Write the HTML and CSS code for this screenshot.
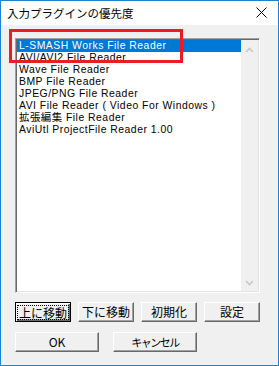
FILE: index.html
```html
<!DOCTYPE html>
<html lang="ja">
<head>
    <meta charset="UTF-8">
    <title>入力プラグインの優先度</title>
    <link rel="stylesheet" href="styles.css">
</head>
<body>
    <div class="window">
        <div class="titlebar">
            <span class="title">入力プラグインの優先度</span>
            <svg class="close" width="11" height="11" viewBox="0 0 11 11">
                <path d="M0.5 0.5 L10.5 10.5 M10.5 0.5 L0.5 10.5" stroke="#000" stroke-width="1" fill="none"/>
            </svg>
        </div>

        <div class="content">
            <div class="listbox">
                <ul class="items">
                    <li class="selected">L-SMASH Works File Reader</li>
                    <li>AVI/AVI2 File Reader</li>
                    <li>Wave File Reader</li>
                    <li>BMP File Reader</li>
                    <li>JPEG/PNG File Reader</li>
                    <li>AVI File Reader ( Video For Windows )</li>
                    <li>拡張編集 File Reader</li>
                    <li>AviUtl ProjectFile Reader 1.00</li>
                </ul>
                <div class="scrollbar">
                    <svg width="9" height="6" viewBox="0 0 9 6">
                        <path d="M1 5 L4.5 1.5 L8 5" stroke="#c8c8c8" stroke-width="1.6" fill="none"/>
                    </svg>
                    <svg width="9" height="6" viewBox="0 0 9 6">
                        <path d="M1 1 L4.5 4.5 L8 1" stroke="#c8c8c8" stroke-width="1.6" fill="none"/>
                    </svg>
                </div>
            </div>

            <div class="buttons">
                <button class="btn default"><span class="focus">上に移動</span></button>
                <button class="btn">下に移動</button>
                <button class="btn">初期化</button>
                <button class="btn">設定</button>
            </div>
            <div class="buttons wide">
                <button class="btn">OK</button>
                <button class="btn narrow-text">キャンセル</button>
            </div>
        </div>

        <div class="highlight-box"></div>
    </div>
</body>
</html>
```

FILE: styles.css
```css
body {
    margin: 0;
    background: #f0f0f0;
}

.window {
    position: relative;
    width: 279px;
    height: 366px;
    box-sizing: border-box;
    border: 1px solid #1883d7;
    background: #f0f0f0;
    font-family: "Liberation Sans", "Noto Sans CJK JP", sans-serif;
    color: #000;
}

.titlebar {
    height: 24px;
    background: #fff;
    display: flex;
    align-items: center;
    justify-content: space-between;
    padding: 0 11px 0 6px;
}

.title {
    font-family: "Noto Sans CJK JP", sans-serif;
    font-size: 11.5px;
    line-height: 14px;
    margin-top: -1px;
}

.close {
    display: block;
    margin-top: -2px;
}

.content {
    padding: 13px 0 0 14px;
}

.listbox {
    width: 245px;
    height: 255px;
    box-sizing: border-box;
    display: flex;
    background: #fff;
    border: 1px solid;
    border-color: #a0a0a0 #fff #fff #a0a0a0;
    box-shadow: inset 1px 1px #696969, inset -1px -1px #e3e3e3;
    padding: 1px;
}

.items {
    flex: 1;
    list-style: none;
    margin: 0;
    padding: 0;
    font-size: 10.4px;
    letter-spacing: 0.5px;
}

.items li {
    height: 12px;
    line-height: 12px;
    padding-left: 2px;
    white-space: nowrap;
}

.items li.selected {
    background: #0078d7;
    color: #fff;
}

.scrollbar {
    width: 17px;
    background: #f0f0f0;
    display: flex;
    flex-direction: column;
    align-items: center;
    justify-content: space-between;
    padding: 7px 0 5px;
    box-sizing: border-box;
}

.scrollbar svg {
    display: block;
}

.buttons {
    display: flex;
    gap: 7px;
    margin-top: 9px;
}

.buttons.wide {
    gap: 14px;
    margin-top: 10px;
}

.btn {
    width: 56px;
    height: 20px;
    padding: 0;
    box-sizing: border-box;
    background: #f0f0f0;
    border: 1px solid;
    border-color: #fff #696969 #696969 #fff;
    box-shadow: inset -1px -1px #a0a0a0;
    font-family: "Noto Sans CJK JP", sans-serif;
    font-size: 12px;
    line-height: 14px;
    color: #000;
    display: flex;
    align-items: center;
    justify-content: center;
}

.buttons.wide .btn {
    width: 84px;
}

.btn.default {
    border-color: #000;
    box-shadow: inset 1px 1px #fff, inset -1px -1px #696969, inset -2px -2px #a0a0a0;
}

.focus {
    border: 1px dotted #000;
    padding: 0 1px;
    line-height: 13px;
}

.narrow-text {
    letter-spacing: -1.5px;
    font-size: 11px;
}

.highlight-box {
    position: absolute;
    left: 8px;
    top: 28px;
    width: 174px;
    height: 34px;
    box-sizing: border-box;
    border: 3px solid #ec1c24;
}
```
